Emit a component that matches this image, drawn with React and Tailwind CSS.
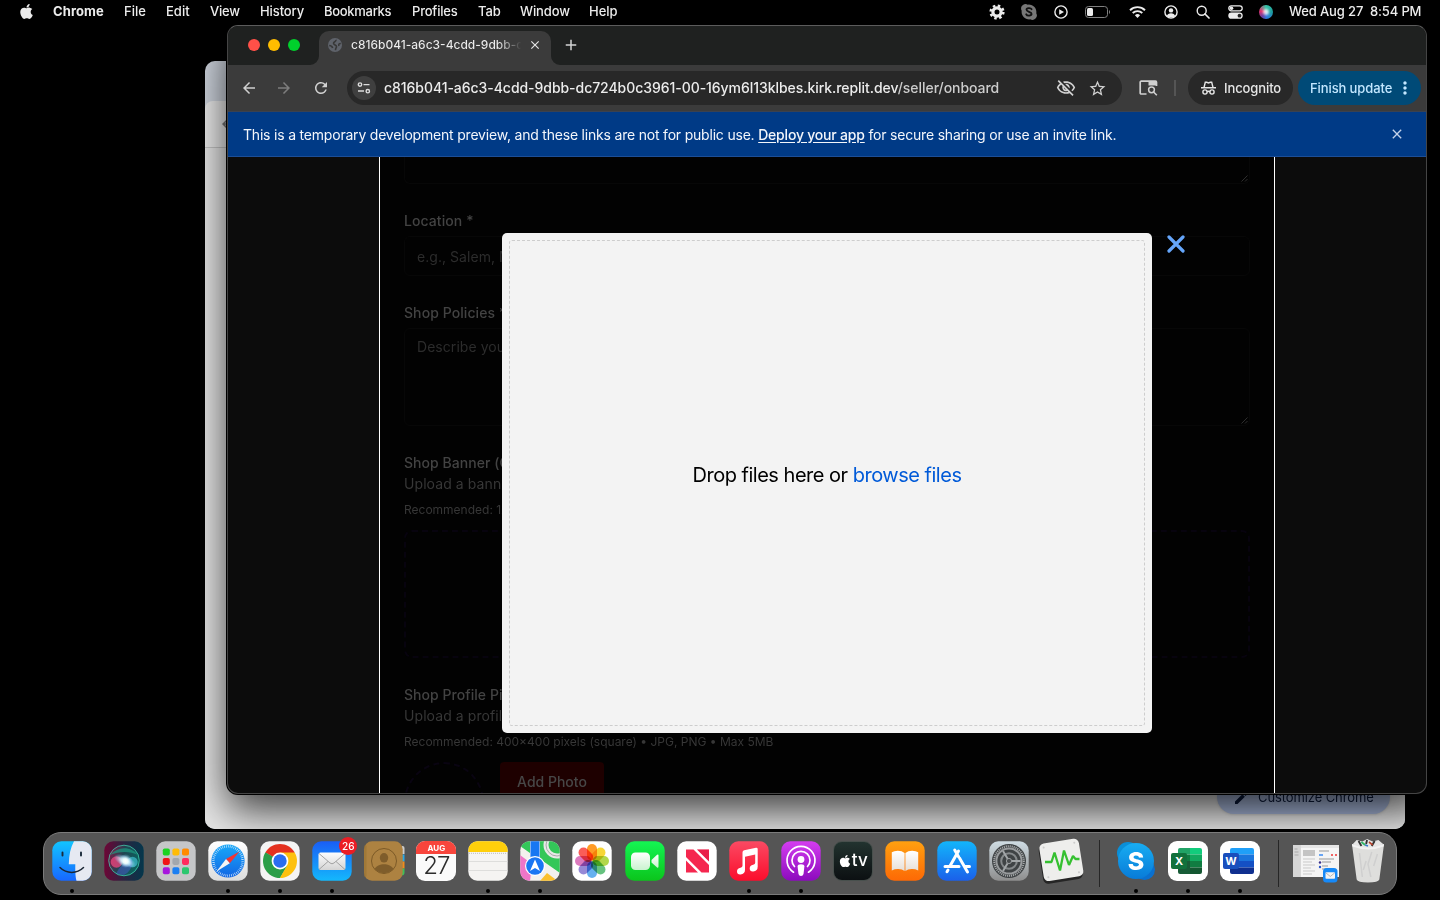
import React from "react";
import { FaApple } from "react-icons/fa";
import {
  MdArrowBack, MdArrowForward, MdRefresh, MdClose, MdAdd, MdStarBorder, MdMoreVert,
  MdOutlineVisibilityOff, MdEdit,
} from "react-icons/md";

const font = "font-['Inter','Liberation_Sans',sans-serif]";

/* ---------- menu bar ---------- */
function MenuBar() {
  return (
    <header className="flex h-[25px] shrink-0 items-start bg-black text-[13px] font-medium text-[#ececec]">
      <div className="flex h-[24px] w-[53px] items-center justify-start pl-[18px]"><FaApple size={17} className="-mt-0.5" /></div>
      <nav className="flex h-[23px] items-center whitespace-nowrap">
        <span className="w-[71px] font-bold tracking-[0.1px]">Chrome</span>
        <span className="w-[42px]">File</span>
        <span className="w-[44px]">Edit</span>
        <span className="w-[50px] tracking-[-0.2px]">View</span>
        <span className="w-[64px] tracking-[-0.1px]">History</span>
        <span className="w-[88px] tracking-[-0.3px]">Bookmarks</span>
        <span className="w-[66px] tracking-[-0.2px]">Profiles</span>
        <span className="w-[42px] tracking-[-0.1px]">Tab</span>
        <span className="w-[69px] tracking-[-0.1px]">Window</span>
        <span>Help</span>
      </nav>
      <div className="ml-auto flex h-[24px] items-center">
        <svg className="mr-[16px]" width="16" height="16" viewBox="0 0 16 16">
          <circle cx="8" cy="8" r="4.100" fill="none" stroke="currentColor" strokeWidth="3.200" />
          <circle cx="8" cy="8" r="6.300" fill="none" stroke="currentColor" strokeWidth="2.600" strokeDasharray="2.475 2.475" />
        </svg>
        <svg className="mr-[17px]" width="16" height="16" viewBox="0 0 16 16">
          <path d="M4.5 0A4.5 4.5 0 0 0 .7 6.8 7.5 7.5 0 0 0 9.2 15.3 4.5 4.5 0 0 0 15.3 9.2 7.5 7.5 0 0 0 6.8.7 4.5 4.5 0 0 0 4.5 0Z" fill="#777" />
          <path d="M10.6 5.2C9.8 3.6 5.4 3.6 5.5 5.8c.1 2.2 5.2 1.8 5.1 4.1-.1 2.2-4.6 2.2-5.4.4" fill="none" stroke="#111" strokeWidth="1.8" strokeLinecap="round" />
        </svg>
        <svg className="mr-[17px]" width="14" height="14" viewBox="0 0 14 14">
          <circle cx="7" cy="7" r="6.1" fill="none" stroke="currentColor" strokeWidth="1.4" />
          <path d="M5.2 4.2v5.6L10 7z" fill="currentColor" />
        </svg>
        <svg className="mr-[18px]" width="26" height="12" viewBox="0 0 26 12">
          <rect x=".5" y=".5" width="22" height="11" rx="3" fill="none" stroke="#808080" />
          <rect x="2" y="2" width="6" height="8" rx="1.5" fill="currentColor" />
          <path d="M24 4v4q1-.6 1-2t-1-2z" fill="#808080" />
        </svg>
        <svg className="mr-[18px]" width="17" height="12" viewBox="0 0 17 12">
          <path d="M1 4.2a10.8 10.8 0 0 1 15 0M3.7 7a7 7 0 0 1 9.6 0" fill="none" stroke="currentColor" strokeWidth="1.9" />
          <path d="M8.5 12 5.9 9.2a3.8 3.8 0 0 1 5.2 0z" fill="currentColor" />
        </svg>
        <svg className="mr-[18px]" width="14" height="14" viewBox="0 0 14 14">
          <circle cx="7" cy="7" r="6.1" fill="none" stroke="currentColor" strokeWidth="1.4" />
          <circle cx="7" cy="5.4" r="2.2" fill="currentColor" />
          <path d="M2.8 11.2c.5-4 7.9-4 8.4 0C8.800 13 5 13 2.800 11.200z" fill="currentColor" />
        </svg>
        <svg className="mr-[18px]" width="14" height="14" viewBox="0 0 14 14">
          <circle cx="5.700" cy="5.700" r="4.500" fill="none" stroke="currentColor" strokeWidth="1.400" />
          <path d="m9 9 4 4" stroke="currentColor" strokeWidth="1.700" strokeLinecap="round" />
        </svg>
        <svg className="mr-[16px]" width="15" height="14" viewBox="0 0 15 14">
          <rect x=".8" y=".8" width="13.400" height="5" rx="2.500" fill="none" stroke="currentColor" strokeWidth="1.300" />
          <circle cx="3.500" cy="3.300" r="1.800" fill="currentColor" />
          <rect x=".3" y="7.600" width="14.400" height="6.200" rx="3.100" fill="currentColor" />
          <circle cx="11.500" cy="10.700" r="1.900" fill="#222" />
        </svg>
        <span className="mr-[16px] flex size-[14px] items-center justify-center rounded-full bg-[conic-gradient(#36c5a8,#1d9c9c_90deg,#2d7de0_170deg,#6b3fa0_220deg,#e2306a_280deg,#36c5a8)]">
          <span className="size-[6px] rounded-full bg-white/80 blur-[1px]" />
        </span>
        <span className="-mt-px w-[151px] whitespace-pre tracking-[-0.13px]">Wed Aug 27  8:54 PM</span>
      </div>
    </header>
  );
}

/* ---------- window behind ---------- */
function BackWindow() {
  return (
    <section className="absolute left-[205px] top-[61px] flex h-[768px] w-[1200px] flex-col overflow-hidden rounded-[10px] bg-[#cdd3dc]">
      <div className="h-[40px] shrink-0" />
      <div className="flex h-[47px] shrink-0 items-center rounded-t-[8px] border-b border-[#c4c4c4] bg-[#eaeaea] pl-[14px] text-[#777]">
        <MdArrowBack size={18} />
      </div>
      <div className="flex grow items-end justify-end bg-[#e6e6e6] pb-[15px] pr-[15px]">
        <div className="flex h-[34px] w-[173px] items-center gap-[9px] rounded-full bg-[#a9b9dc] pl-[16px] pt-[2px] text-[13px] text-[#0b1a3c] shadow">
          <MdEdit size={16} /><span className="whitespace-nowrap tracking-[-0.1px]">Customize Chrome</span>
        </div>
      </div>
    </section>
  );
}

/* ---------- browser chrome ---------- */
function TabStrip() {
  return (
    <div className="flex h-[39px] shrink-0 items-end bg-[#1f2120]">
      <div className="flex w-[82px] gap-[8px] pb-[14px] pl-[20px]">
        <span className="size-[12px] shrink-0 rounded-full bg-[#ff5048]" />
        <span className="size-[12px] shrink-0 rounded-full bg-[#ffbd00]" />
        <span className="size-[12px] shrink-0 rounded-full bg-[#00d02c]" />
      </div>
      <svg width="9" height="9" viewBox="0 0 9 9"><path d="M9 0v9H0a9 9 0 0 0 9-9z" fill="#3b3b3b" /></svg>
      <div className="flex h-[34px] w-[232px] items-center rounded-t-[10px] bg-[#3b3b3b] pb-[6px] pl-[9px]">
        <svg width="14" height="14" viewBox="0 0 14 14" className="shrink-0">
          <circle cx="7" cy="7" r="7" fill="#5f636b" />
          <path d="M8 1.800C8.500 4 5.500 3.500 5.500 5.200S8.500 7 8.500 8.500 7.500 10 7.500 12.200M1.200 7.500c1.800.2 3 .8 3.500 2.500M12.800 5.500c-2 0-2.500.8-1.800 2.500" fill="none" stroke="#383838" strokeWidth="1.600" />
        </svg>
        <span className="ml-[9px] w-[174px] shrink-0 whitespace-nowrap bg-gradient-to-r from-[#ececec] from-84% to-transparent to-98% bg-clip-text text-[12px] font-medium text-transparent">c816b041-a6c3-4cdd-9dbb-d</span>
        <MdClose size={14} className="ml-[3px] shrink-0 text-[#e4e4e4]" />
      </div>
      <svg width="9" height="9" viewBox="0 0 9 9"><path d="M0 0v9h9a9 9 0 0 1-9-9z" fill="#3b3b3b" /></svg>
      <MdAdd size={18} className="mb-[11px] ml-[2px] text-[#d4d4d4]" />
    </div>
  );
}

function Toolbar() {
  return (
    <div className="flex h-[46px] shrink-0 items-center bg-[#3b3b3b] pl-[12px] text-[#d0d0d0]">
      <MdArrowBack size={18} />
      <MdArrowForward size={18} className="ml-[17px] text-[#7d7d7d]" />
      <MdRefresh size={18} className="ml-[19px]" />
      <div className="ml-[17px] flex h-[34px] w-[775px] items-center rounded-full bg-[#282828] pl-[5px]">
        <span className="flex size-[24px] items-center justify-center rounded-full bg-[#3f3f3f]">
          <svg width="14" height="14" viewBox="0 0 14 14" fill="none" stroke="#dcdcdc" strokeWidth="1.400">
            <circle cx="3" cy="3.600" r="1.700" /><path d="M6.500 3.600H12.500M1 10h6" /><circle cx="10.800" cy="10.200" r="1.700" />
          </svg>
        </span>
        <span className="-mt-px ml-[8px] w-[616px] whitespace-nowrap text-[14px] font-medium tracking-[-0.05px] text-[#ececec]">c816b041-a6c3-4cdd-9dbb-dc724b0c3961-00-16ym6l13klbes.kirk.replit.dev<span className="text-[#cdcdcd]">/seller/onboard</span></span>
        <MdOutlineVisibilityOff size={20} className="ml-auto" />
        <MdStarBorder size={19} className="ml-[12px] mr-[15px]" />
      </div>
      <svg className="ml-[17px]" width="19" height="16" viewBox="0 0 19 16" fill="none" stroke="currentColor">
        <path d="M7.500 14H2.200a1 1 0 0 1-1-1V2.200a1 1 0 0 1 1-1H16.500a1 1 0 0 1 1 1V6" strokeWidth="1.700" />
        <path d="M9.500 1h8v4.500h-8z" fill="currentColor" stroke="none" />
        <circle cx="12.500" cy="9.800" r="2.900" strokeWidth="1.500" /><path d="m14.600 12 3.200 3.200" strokeWidth="1.600" />
      </svg>
      <span className="ml-[16px] h-[16px] w-[2px] bg-[#555]" />
      <div className="ml-[12px] flex h-[34px] w-[105px] items-center rounded-full bg-[#282828] pl-[13px] text-[13px] font-medium text-[#e6e6e6]">
        <svg width="15" height="15" viewBox="0 0 15 15" fill="none" stroke="currentColor" strokeWidth="1.400">
          <path d="M0 6.700h15M3 6.500 4.300 1.300h1.400l1.800.6 1.800-.6h1.400L12 6.500" /><circle cx="4" cy="11" r="2.100" /><circle cx="11" cy="11" r="2.100" /><path d="M6 10.800q1.500-1 3 0" />
        </svg>
        <span className="ml-[8px] mt-px tracking-[-0.1px]">Incognito</span>
      </div>
      <div className="ml-[5px] flex h-[34px] w-[123px] items-center rounded-full bg-[#004a77] pl-[12px] text-[13px] font-medium text-[#c2e7ff]">
        <span className="mt-px w-[85px] whitespace-nowrap tracking-[-0.1px]">Finish update</span>
        <MdMoreVert size={20} />
      </div>
    </div>
  );
}

function Banner() {
  return (
    <div className="flex h-[46px] shrink-0 items-center border-b border-t border-b-[#1c4e97] border-t-[#3a4150] bg-[#003a86] pl-[15px] pr-[21px] text-[14px] text-[#f3f6fb]">
      <p className="whitespace-nowrap tracking-[-0.2px]">
        This is a temporary development preview, and these links are not for public use. <a className="font-medium underline underline-offset-2">Deploy your app</a> for secure sharing or use an invite link.
      </p>
      <MdClose size={16} className="ml-auto text-[#c3d2ea]" />
    </div>
  );
}

/* ---------- page ---------- */
function Grip() {
  return (
    <svg className="absolute bottom-[1px] right-[1px]" width="7" height="7" viewBox="0 0 7 7">
      <path d="m.5 6.500 6-6M4 6.500 6.500 4" stroke="#3a3a3a" strokeWidth=".8" />
    </svg>
  );
}

function UploadIntro({ title, text, note }) {
  return (
    <>
      <div className="mt-[27px] h-[20px] text-[14px] font-medium leading-5 tracking-[0.05px] text-[#434343]">{title}</div>
      <div className="mt-px h-[20px] text-[14px] leading-5 tracking-[0.08px] text-[#373737]">{text}</div>
      <div className="mt-[8px] h-[16px] text-[12px] leading-4 text-[#373737]">{note}</div>
    </>
  );
}

function SellerForm() {
  const label = "mt-[27px] mb-[5px] h-[20px] text-[14px] font-medium leading-5 tracking-[0.08px] text-[#434343]";
  return (
    <div className="flex h-full flex-col whitespace-nowrap border-x border-white bg-[#020202] px-[24px]">
      <div className="relative h-[27px] shrink-0 rounded-b-[6px] border border-t-0 border-[#070707]"><Grip /></div>
      <div className={label}>Location *</div>
      <div className="h-[40px] shrink-0 rounded-[6px] border border-[#070707] pl-[12px] pt-[10px] text-[14px] leading-5 tracking-[0.05px] text-[#2c2c2c]">e.g., Salem, MA</div>
      <div className={label}>Shop Policies *</div>
      <div className="relative h-[98px] shrink-0 rounded-[6px] border border-[#070707] pl-[12px] pt-[8px] text-[14px] leading-5 tracking-[0.05px] text-[#2c2c2c]">Describe your<Grip /></div>
      <UploadIntro title="Shop Banner (Optional)" text="Upload a banner" note="Recommended: 1200" />
      <div className="mt-[12px] h-[128px] shrink-0 rounded-[8px] border-2 border-dashed border-[#07030e]" />
      <UploadIntro title="Shop Profile Picture" text="Upload a profile" note="Recommended: 400×400 pixels (square) • JPG, PNG • Max 5MB" />
      <div className="mt-[12px] flex gap-[16px]">
        <div className="size-[80px] shrink-0 rounded-full border-2 border-dashed border-[#090411]" />
        <div className="h-[40px] w-[104px] rounded-[4px] bg-[#1e0000] text-center text-[14px] font-medium leading-[40px] text-[#474747]">Add Photo</div>
      </div>
    </div>
  );
}

function DropModal() {
  return (
    <div className="absolute left-[274px] top-[76px] flex h-[500px] w-[650px] rounded-[5px] bg-[#f3f3f3] p-[7px]">
      <div className="flex grow items-center justify-center rounded-[3px] border border-dashed border-[#cdcdcd] pb-[16px]">
        <p className="whitespace-nowrap text-[20px] tracking-[-0.49px] text-black">Drop files here or <span className="text-[#005ad8]">browse files</span></p>
      </div>
      <svg className="absolute -right-[33px] top-[2px]" width="18" height="18" viewBox="0 0 18 18">
        <path d="m2 2 14 14M16 2 2 16" stroke="#65a6fb" strokeWidth="3.200" strokeLinecap="round" />
      </svg>
    </div>
  );
}

function BrowserWindow() {
  return (
    <section className="absolute left-[227px] top-[25px] flex h-[769px] w-[1200px] flex-col overflow-hidden rounded-[11px] border border-[#454545] border-t-[#5c5c5c] bg-[#0c0c0c] shadow-[0_0_0_1px_#000]">
      <TabStrip />
      <Toolbar />
      <Banner />
      <main className="relative h-[636px] shrink-0 overflow-hidden px-[151px]">
        <SellerForm />
        <DropModal />
      </main>
    </section>
  );
}

/* ---------- dock icons ---------- */
const Tile = ({ fill, children }) => (
  <svg className="block overflow-visible" width="40" height="40" viewBox="0 0 40 40">
    <rect x=".3" y=".3" width="39.400" height="39.400" rx="9" fill={fill} />
    {children}
  </svg>
);

const Grad = ({ id, a, b }) => (
  <linearGradient id={id} x1="0" y1="0" x2="0" y2="1"><stop stopColor={a} /><stop offset="1" stopColor={b} /></linearGradient>
);

const Finder = () => (
  <Tile fill="url(#gFinder)">
    <defs><Grad id="gFinder" a="#12c4ff" b="#1767ff" /></defs>
    <path d="M22 .3h8.700a9 9 0 0 1 9 9v21.400a9 9 0 0 1-9 9H24.500c-1-4-1.300-8-1.200-16.500h-6.500C17 14 18.500 6.500 22 .3z" fill="#e6e9f2" />
    <path d="M10.500 11.500v3M29 11.500v3" stroke="#1a2a3a" strokeWidth="1.900" strokeLinecap="round" />
    <path d="M8 26.500c6.500 6.500 17 6.500 23.500 0" fill="none" stroke="#1b2735" strokeWidth="1.500" strokeLinecap="round" />
  </Tile>
);

const Siri = () => (
  <Tile fill="url(#gSiri)">
    <defs>
      <linearGradient id="gSiri"><stop stopColor="#6d0636" /><stop offset=".5" stopColor="#2b2440" /><stop offset="1" stopColor="#03374c" /></linearGradient>
      <linearGradient id="gOrb" x2="1" y2=".4"><stop stopColor="#a30f45" /><stop offset=".5" stopColor="#1f4a55" /><stop offset="1" stopColor="#0b6a62" /></linearGradient>
      <radialGradient id="gGlow"><stop stopColor="#fff" /><stop offset=".35" stopColor="#eff" stopOpacity=".85" /><stop offset="1" stopColor="#8cf" stopOpacity="0" /></radialGradient>
    </defs>
    <circle cx="20" cy="19.500" r="15.500" fill="url(#gOrb)" opacity=".85" />
    <path d="M6 14C14 5 27 5 34 14c-8-4-18-4-28 0z" fill="#1d9a80" opacity=".7" />
    <circle cx="12.500" cy="21" r="5.800" fill="#f0457f" opacity=".75" /><circle cx="28.500" cy="21" r="5.200" fill="#3eb8c8" opacity=".75" />
    <path d="M12 33c3-7 8-12 16-14 1 6-2 12-8 15z" fill="#465bd0" opacity=".5" />
    <circle cx="20" cy="19.500" r="15.300" fill="none" stroke="#45d6b5" strokeWidth="1" opacity=".7" />
    <ellipse cx="21" cy="20" rx="12" ry="5.500" fill="url(#gGlow)" transform="rotate(25 21 20)" /><circle cx="21.500" cy="20" r="7" fill="url(#gGlow)" />
  </Tile>
);

const Launchpad = () => (
  <Tile fill="#c5c6c8">
    {["#1bd321", "#ffbb05", "#ff8a00", "#f01416", "#a2a7ad", "#ff2b5e", "#a716dd", "#1c7ff2", "#2bc76f"].map((c, i) => (
      <rect key={c} x={6.800 + (i % 3) * 9.600} y={7.500 + Math.floor(i / 3) * 9.400} width="7" height="7" rx="1.800" fill={c} />
    ))}
  </Tile>
);

const Safari = () => (
  <Tile fill="url(#gSafT)">
    <defs><Grad id="gSafT" a="#fff" b="#dcdcdc" /><Grad id="gSaf" a="#18a8f8" b="#1266e4" /></defs>
    <circle cx="20" cy="20" r="16.600" fill="url(#gSaf)" />
    <circle cx="20" cy="20" r="14.600" fill="none" stroke="#e8f4ff" strokeWidth="2.400" strokeDasharray=".6 1.300" />
    <path d="M31.500 10.500 21.800 22.200 18 18z" fill="#f33432" /><path d="M8.500 30.500 18 18l3.800 4.200z" fill="#f5f5f5" />
  </Tile>
);

const Chrome = () => (
  <Tile fill="#f4f4f4">
    <path d="M20 20 5.300 11.500A17 17 0 0 1 34.700 11.500z" fill="#e4311f" />
    <path d="M20 20 5.300 11.500A17 17 0 0 0 20 37z" fill="#2b9e48" />
    <path d="M20 11.500h14.700A17 17 0 0 1 20 37l7.400-12.800z" fill="#fdc10f" />
    <path d="m5.300 11.500 7.300 12.800L20 20zM27.400 24.300 20 37 15 26z" fill="#2b9e48" />
    <path d="M27.400 24.300 20 37 28 34l5-12z" fill="#fdc10f" />
    <circle cx="20" cy="20" r="8.400" fill="#fff" /><circle cx="20" cy="20" r="6.700" fill="#2a6df0" />
  </Tile>
);

const Mail = () => (
  <Tile fill="url(#gMail)">
    <defs><Grad id="gMail" a="#1a5ef5" b="#14b8fc" /><Grad id="gEnv" a="#fdfdfd" b="#d4d4d4" /></defs>
    <rect x="6.500" y="11.500" width="27" height="17.500" rx="2" fill="url(#gEnv)" />
    <path d="m7 12.500 11 9.500q2 1.600 4 0l11-9.500M7 28.500l9-8M33 28.500l-9-8" fill="none" stroke="#9b9b9b" strokeWidth=".9" />
  </Tile>
);

const Contacts = () => (
  <svg className="block overflow-visible" width="40" height="40" viewBox="0 0 40 40">
    <path d="M35 5h3.500q2 0 2 2v6h-5z" fill="#ccc" /><path d="M35 13.500h5.500v7H35z" fill="#29a9e8" /><path d="M35 20.500h5.500v7H35z" fill="#f08c1e" /><path d="M35 27.500h5.500v4q0 3-3 3H35z" fill="#3fc05a" />
    <rect x="0" y=".3" width="38.700" height="39.400" rx="8" fill="#ad8241" />
    <rect x="0" y="4" width="2.500" height="32" rx="1.500" fill="#96702f" opacity=".5" />
    <circle cx="20" cy="20" r="12.500" fill="none" stroke="#7c5a27" strokeWidth="1" />
    <ellipse cx="20" cy="16.800" rx="4.200" ry="4.800" fill="#7f5d2b" />
    <path d="M10.500 28c3-6.500 16-6.500 19 0-5 5.500-14 5.500-19 0z" fill="#7f5d2b" />
  </svg>
);

const Calendar = () => (
  <div className={`flex size-[40px] flex-col items-center overflow-hidden rounded-[9px] bg-[#fafafa] ${font}`}>
    <div className="flex h-[13px] w-full shrink-0 items-center justify-center bg-[#f8453c] text-[8px] font-bold leading-none text-white">AUG</div>
    <div className="text-[24px] font-light leading-[24px] tracking-[-1px] text-[#2c2c2c]">27</div>
  </div>
);

const Notes = () => (
  <Tile fill="#f5f4f2">
    <path d="M.3 11V9.300a9 9 0 0 1 9-9h21.400a9 9 0 0 1 9 9V11z" fill="#ffcf0b" />
    <path d="M1 12.300h38" stroke="#9c9c9c" strokeWidth=".8" strokeDasharray=".8 1.200" /><path d="M.5 20.500h39M.5 29.500h39" stroke="#d8d8d6" strokeWidth=".8" />
  </Tile>
);

const Maps = () => (
  <Tile fill="#f3f1ee">
    <clipPath id="cMap"><rect x=".3" y=".3" width="39.400" height="39.400" rx="9" /></clipPath>
    <g clipPath="url(#cMap)">
      <path d="M0 0h10v12L0 5zM20 0h20v32L20 18z" fill="#34c759" /><path d="M0 14l12 9-2 17H0z" fill="#ef75c8" /><path d="m20 40 7-8 12 9z" fill="#fbc02d" />
      <circle cx="37" cy="4" r="11" fill="none" stroke="#e8e8e8" strokeWidth="5" /><circle cx="37" cy="4" r="11" fill="none" stroke="#a8a8a8" strokeWidth="1" />
      <path d="M10.500 0h9v20h-9z" fill="#1877f2" />
    </g>
    <circle cx="15" cy="25" r="10" fill="#fff" /><circle cx="15" cy="25" r="8.800" fill="#1a76f3" />
    <path d="m15 18.500 5 11.500-5-3-5 3z" fill="#fff" />
  </Tile>
);

const Photos = () => (
  <Tile fill="#fff">
    {["#ff8a00", "#f6cf12", "#a4d02a", "#4bb868", "#4aa2ec", "#8474cf", "#d662b3", "#f9403a"].map((c, i) => (
      <rect key={c} className="mix-blend-multiply" x="15" y="3" width="10" height="16.500" rx="5" fill={c} opacity=".85" transform={`rotate(${i * 45} 20 20)`} />
    ))}
  </Tile>
);

const FaceTime = () => (
  <Tile fill="url(#gFt)">
    <defs><Grad id="gFt" a="#14f553" b="#0bc51c" /><Grad id="gFtc" a="#fff" b="#c9f3cf" /></defs>
    <rect x="6" y="11.500" width="19" height="17.500" rx="4.500" fill="url(#gFtc)" /><path d="m26.500 19 5.600-5.200q1.400-1 1.400.8v11q0 1.800-1.400.8L26.500 21.500z" fill="url(#gFtc)" />
  </Tile>
);

const News = () => (
  <Tile fill="#fff">
    <path d="M9 8.500h7.500L32 24v7.500h-7.500L9 16z" fill="#f5274f" /><path d="M20 8.500h12V20.500zM9 19.500v12h12z" fill="#f5274f" />
    <path d="M20 8.500h12V20.500z" fill="#d81342" opacity=".4" />
  </Tile>
);

const Music = () => (
  <Tile fill="url(#gMu)">
    <defs><Grad id="gMu" a="#fb4a63" b="#fb0d2c" /></defs>
    <path d="M13.500 11.500q0-1.800 1.700-2.200L27 6.800q1.700-.3 1.700 1.400V25.500q0 4.500-4.500 5-3.500.2-3.500-3 0-3 3.500-3.700 2-.4 2-2V13.500L16 15.700v13q0 4.300-4.500 4.800-3.500.2-3.500-3 0-3 3.500-3.700 2-.4 2-2z" fill="#fff" />
  </Tile>
);

const Podcasts = () => (
  <Tile fill="url(#gPod)">
    <defs><Grad id="gPod" a="#d43df0" b="#8c0bbd" /></defs>
    <g fill="none" stroke="#fff" strokeWidth="1.700" strokeLinecap="round">
      <path d="M12.500 31.200A14 14 0 1 1 27.500 31.200" /><path d="M13.500 25.500a9 9 0 1 1 13 0" />
    </g>
    <circle cx="20" cy="18.500" r="3.400" fill="#fff" /><path d="M16.600 25.500q0-2.300 3.400-2.300t3.400 2.300l-.9 7.500q-.5 2-2.500 2t-2.500-2z" fill="#fff" />
  </Tile>
);

const AppleTv = () => (
  <div className={`flex size-[40px] items-center justify-center rounded-[9px] border border-[#48504d] bg-gradient-to-b from-[#22332f] to-[#0c1012] text-[17px] font-medium text-white ${font}`}>
    <FaApple size={14} /><span className="pb-px leading-none">tv</span>
  </div>
);

const Books = () => (
  <Tile fill="url(#gBk)">
    <defs><Grad id="gBk" a="#ffa010" b="#fd6905" /><Grad id="gPg" a="#fff" b="#e7dfd6" /></defs>
    <path d="M19.600 12Q17 9.700 12.800 9.700 9 9.700 6.800 11.200V29.500q3-1.500 6.500-1.400 4 0 6.300 2zM20.400 12Q23 9.700 27.200 9.700q3.800 0 6 1.500V29.500q-3-1.500-6.500-1.400-4 0-6.300 2z" fill="url(#gPg)" />
  </Tile>
);

const AppStore = () => (
  <Tile fill="url(#gAs)">
    <defs><Grad id="gAs" a="#12b5fb" b="#1b60ea" /></defs>
    <g stroke="#fff" strokeWidth="3" strokeLinecap="round"><path d="M21.500 10 13 25M17.700 9l4 7M22.500 17l8 14M8 25.500h14M28 25.500h4.500M11 29l-1 1.700" /></g>
  </Tile>
);

const Settings = () => (
  <Tile fill="url(#gSet)">
    <defs><Grad id="gSet" a="#cfdce3" b="#8e8e8e" /></defs>
    <circle cx="20" cy="20" r="17" fill="#3f4345" /><circle cx="20" cy="20" r="14.800" fill="none" stroke="#a6a9ab" strokeWidth="2" strokeDasharray="1.100 .9" />
    <circle cx="20" cy="20" r="12.600" fill="none" stroke="#999c9e" strokeWidth="2" /><circle cx="20" cy="20" r="7.800" fill="none" stroke="#85898b" strokeWidth="2" />
    <path d="M20 20h11.500M20 20l-6-10M20 20l-6 10" stroke="#a2a6a8" strokeWidth="2" /><circle cx="20" cy="20" r="2.600" fill="#484c4e" stroke="#9a9d9f" />
  </Tile>
);

const Monitor = () => (
  <svg className="block overflow-visible" width="44" height="44" viewBox="0 0 44 44">
    <g transform="rotate(-9 22 22)">
      <rect x="1.500" y="4" width="40" height="38.500" rx="5" fill="#252525" /><rect x="2.500" y="2" width="40" height="38" rx="5" fill="#eeeeec" />
      <circle cx="7" cy="6" r="1" fill="#ccc" /><circle cx="38" cy="6" r="1" fill="#ccc" /><circle cx="7" cy="36" r="1" fill="#ccc" /><circle cx="38" cy="36" r="1" fill="#ccc" />
    </g>
    <path d="M6 23h6.500l3-9.500 5.500 18 4-20 5 14.500 4-9 2.500 3h4" fill="none" stroke="#35c030" strokeWidth="2.300" strokeLinejoin="bevel" />
  </svg>
);

const Skype = () => (
  <div className="relative">
    <svg className="block overflow-visible" width="40" height="40" viewBox="0 0 40 40">
      <defs><Grad id="gSk" a="#18adf2" b="#087bd8" /></defs>
      <circle cx="12" cy="12" r="11" fill="#0a8fd8" /><circle cx="28.500" cy="28.500" r="10.500" fill="#0a70cf" /><circle cx="20" cy="20" r="18" fill="url(#gSk)" />
    </svg>
    <span className={`absolute inset-0 flex items-center justify-center text-[25px] font-extrabold leading-none text-white ${font}`}>S</span>
  </div>
);

function Office({ rows, badge, letter }) {
  return (
    <div className="relative flex size-[40px] items-center justify-center rounded-[9px] bg-white pl-[3px]">
      <svg width="24" height="26" viewBox="0 0 24 26">
        <clipPath id={`c${letter}`}><rect width="24" height="26" rx="2" /></clipPath>
        <g clipPath={`url(#c${letter})`}>{rows.map((r, i) => <path key={i} d={r[0]} fill={r[1]} />)}</g>
      </svg>
      <span className={`absolute left-[3px] top-[12px] flex size-[16px] items-center justify-center rounded-[2px] text-[11px] font-bold leading-none text-white ${badge} ${font}`}>{letter}</span>
    </div>
  );
}

const Excel = () => (
  <Office letter="X" badge="bg-[#11713c]" rows={[["M0 0h12v6.500H0z", "#21a366"], ["M12 0h12v6.500H12z", "#12cc7c"], ["M0 6.500h12V13H0z", "#107c41"], ["M12 6.500h12V13H12z", "#12a85f"], ["M0 13h12v13H0z", "#185c37"], ["M12 13h12v6.500H12z", "#107c41"], ["M12 19.500h12V26H12z", "#135731"]]} />
);
const Word = () => (
  <Office letter="W" badge="bg-[#1a4fbd]" rows={[["M0 0h24v6.500H0z", "#1f9ff8"], ["M0 6.500h24V13H0z", "#1a74dc"], ["M0 13h24v6.500H0z", "#1450c4"], ["M0 19.500h24V26H0z", "#0f2f8f"]]} />
);

const MinimizedMail = () => (
  <svg className="block overflow-visible" width="46" height="40" viewBox="0 0 46 40">
    <rect x="0" y="4" width="46" height="32" fill="#f4f4f4" /><rect x="0" y="4" width="8" height="32" fill="#d6d6d6" /><rect x="8" y="4" width="38" height="3" fill="#e4e4e4" />
    <path d="M10 9h12v6H10z" fill="#c4c4c4" />
    <path d="M10 18h12M10 21h9M10 24h12M10 27h8M10 30h12M10 33h9" stroke="#c9c9c9" strokeWidth="1" /><path d="M1.500 8h3M1.500 11h4M1.500 14h4" stroke="#aaa" />
    <path d="M26 10h10M26 18h15M29 21h9M29 25h6M29 28h8" stroke="#999" strokeWidth="1" /><path d="M26 14h4" stroke="#3a8bf5" strokeWidth="1.500" /><path d="M38 14h2M42 14h2" stroke="#e33" strokeWidth="1.500" />
    <circle cx="27" cy="21.500" r="1.200" fill="#3a2f8a" /><circle cx="27" cy="26" r="1.200" fill="#2a55c9" />
    <rect x="30" y="27" width="14.500" height="14.500" rx="3.500" fill="#1689f8" /><rect x="32.500" y="31.300" width="9.500" height="6.400" rx=".8" fill="#f3f3f3" /><path d="m32.800 31.800 4.500 3.700 4.500-3.700" fill="none" stroke="#999" strokeWidth=".7" />
  </svg>
);

const Trash = () => (
  <svg className="block overflow-visible" width="34" height="44" viewBox="0 0 36 44" preserveAspectRatio="none">
    <path d="M2 5 6 1 12 2.500 17 0l6 2.500L29 1l5 4-3 5H6z" fill="#e5e5e5" />
    <path d="m8 2 3 5M25 2l-3 5M17 1l-1 4" stroke="#333" strokeWidth="2" /><path d="m11 3 4 3" stroke="#30b96a" strokeWidth="2" /><path d="m19 3 4 3" stroke="#b5432d" strokeWidth="1.600" /><path d="m15 6 3 1" stroke="#3b78c9" strokeWidth="1.600" />
    <path d="M1 5q17 7 34 0L30 40.500q-1 3-12 3t-12-3z" fill="#dededc" /><path d="M1 5q17 7 34 0l-.5 2.500q-16 6-33 0z" fill="#f2f2f2" />
    <path d="m9 14 3 24M16 22l-3 9M22 13l-4 12 3 13M28 15l-4 12" stroke="#cfcfcf" strokeWidth="1.600" fill="none" />
  </svg>
);

const apps = [
  [Finder, true], [Siri], [Launchpad], [Safari, true], [Chrome, true], [Mail, true, "26"], [Contacts], [Calendar], [Notes, true], [Maps, true],
  [Photos], [FaceTime], [News], [Music, true], [Podcasts, true], [AppleTv], [Books], [AppStore], [Settings], [Monitor],
];
const office = [[Skype, true], [Excel, true], [Word, true]];
const shelf = [[MinimizedMail], [Trash]];

function DockCell({ item }) {
  const [Icon, running, count] = item;
  return (
    <div className="relative flex w-[52.060px] shrink-0 flex-col items-center">
      <div className="flex h-[56px] items-center justify-center">
        <Icon />
      </div>
      {running && <span className="size-[4px] rounded-full bg-black" />}
      {count && <span className={`absolute right-[1px] top-[4px] flex size-[18px] items-center justify-center rounded-full bg-[#ec1c24] text-[10px] font-medium text-white ${font}`}>{count}</span>}
    </div>
  );
}

const Divider = ({ className }) => (
  <div className={`flex shrink-0 justify-center pt-[7px] ${className}`}><span className="h-[47px] w-px bg-[#262626]" /></div>
);

function Dock() {
  return (
    <footer className="absolute left-[43px] top-[832px] flex h-[63px] w-[1354px] rounded-[18px] border border-[#7b7b7b] bg-[#555] pl-[2px]">
      {apps.map((a, i) => <DockCell key={i} item={a} />)}
      <Divider className="w-[23px] pl-[2px]" />
      {office.map((a, i) => <DockCell key={i} item={a} />)}
      <Divider className="w-[24px]" />
      {shelf.map((a, i) => <DockCell key={i} item={a} />)}
    </footer>
  );
}

export default function App() {
  return (
    <div className={`relative flex h-[900px] w-[1440px] flex-col overflow-hidden bg-black ${font}`}>
      <MenuBar />
      <BackWindow />
      <div className="absolute left-[205px] top-[61px] h-[768px] w-[1200px] overflow-hidden rounded-[10px]">
        <div className="absolute left-[22px] top-[-36px] h-[769px] w-[1200px] rounded-[11px] shadow-[0_16px_40px_rgba(0,0,0,0.75)]" />
      </div>
      <BrowserWindow />
      <Dock />
    </div>
  );
}
